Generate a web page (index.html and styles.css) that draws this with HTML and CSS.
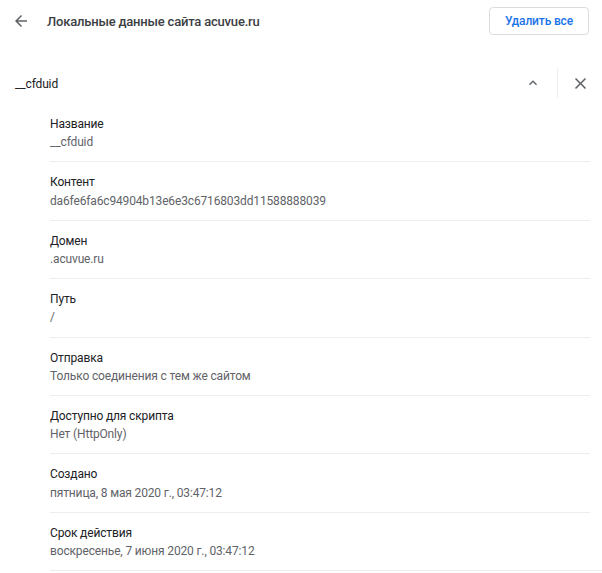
FILE: index.html
```html
<!DOCTYPE html>
<html lang="ru">
<head>
    <meta charset="UTF-8">
    <title>Локальные данные сайта acuvue.ru</title>
    <link rel="stylesheet" href="styles.css">
</head>
<body>
    <div class="top-bar">
        <button class="icon-btn back-btn" aria-label="Назад">
            <svg viewBox="0 0 24 24" width="18" height="18"><path d="M20 11H7.83l5.59-5.59L12 4l-8 8 8 8 1.41-1.41L7.83 13H20v-2z"/></svg>
        </button>
        <h1 class="page-title">Локальные данные сайта acuvue.ru</h1>
        <button class="remove-all">Удалить все</button>
    </div>

    <div class="cookie-head">
        <span class="cookie-name">__cfduid</span>
        <button class="icon-btn chevron" aria-label="Свернуть">
            <svg viewBox="0 0 24 24" width="16" height="16"><path d="M12 8l-6 6 1.41 1.41L12 10.83l4.59 4.58L18 14z"/></svg>
        </button>
        <span class="v-sep"></span>
        <button class="icon-btn close" aria-label="Удалить">
            <svg viewBox="0 0 24 24" width="19" height="19"><path d="M19 6.41L17.59 5 12 10.59 6.41 5 5 6.41 10.59 12 5 17.59 6.41 19 12 13.41 17.59 19 19 17.59 13.41 12z"/></svg>
        </button>
    </div>

    <div class="details">
        <div class="detail">
            <div class="label">Название</div>
            <div class="value">__cfduid</div>
        </div>
        <div class="detail">
            <div class="label">Контент</div>
            <div class="value">da6fe6fa6c94904b13e6e3c6716803dd11588888039</div>
        </div>
        <div class="detail">
            <div class="label">Домен</div>
            <div class="value">.acuvue.ru</div>
        </div>
        <div class="detail">
            <div class="label">Путь</div>
            <div class="value">/</div>
        </div>
        <div class="detail">
            <div class="label">Отправка</div>
            <div class="value">Только соединения с тем же сайтом</div>
        </div>
        <div class="detail">
            <div class="label">Доступно для скрипта</div>
            <div class="value">Нет (HttpOnly)</div>
        </div>
        <div class="detail">
            <div class="label">Создано</div>
            <div class="value">пятница, 8 мая 2020 г., 03:47:12</div>
        </div>
        <div class="detail">
            <div class="label">Срок действия</div>
            <div class="value">воскресенье, 7 июня 2020 г., 03:47:12</div>
        </div>
    </div>
</body>
</html>
```

FILE: styles.css
```css
:root {
    --text: #202124;
    --text-secondary: #5f6368;
    --blue: #1a73e8;
    --line: #eceef0;
}

body {
    margin: 0;
    font-family: Roboto, "Liberation Sans", sans-serif;
    font-size: 12px;
    letter-spacing: -0.15px;
    color: var(--text);
    background: #fff;
}

button {
    font-family: inherit;
    letter-spacing: inherit;
    background: none;
    border: none;
    padding: 0;
    cursor: pointer;
}

.icon-btn {
    display: flex;
    align-items: center;
    justify-content: center;
    width: 32px;
    height: 32px;
}

.icon-btn svg {
    fill: var(--text-secondary);
}

/* верхняя панель */
.top-bar {
    display: flex;
    align-items: center;
    height: 42px;
    padding: 0 13px 0 5px;
}

.page-title {
    flex: 1;
    margin: 0 0 0 10px;
    font-size: 13px;
    font-weight: 500;
    letter-spacing: -0.2px;
    color: #3c4043;
}

.remove-all {
    height: 28px;
    padding: 0 15px;
    border: 1px solid #dadce0;
    border-radius: 4px;
    color: var(--blue);
    font-size: 12px;
    font-weight: 500;
}

/* строка cookie */
.cookie-head {
    display: flex;
    align-items: center;
    height: 40px;
    margin-top: 21px;
    padding: 0 6px 0 15px;
}

.cookie-name {
    flex: 1;
    padding-top: 1px;
}

.v-sep {
    width: 1px;
    height: 30px;
    margin: 0 6px 0 8px;
    background: var(--line);
}

/* подробности */
.details {
    padding: 1px 12px 0 50px;
}

.detail {
    padding: 11px 0 10px;
    border-bottom: 1px solid var(--line);
    line-height: 18.2px;
}

.detail:last-child {
    margin-right: -12px;
}

.value {
    color: var(--text-secondary);
}
```
